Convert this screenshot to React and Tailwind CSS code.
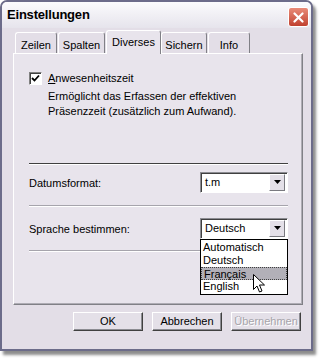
import React from 'react';

const font = { fontFamily: '"Liberation Sans", Arial, sans-serif' };

const tabs = [
  { label: 'Zeilen', w: 'w-[42px]' },
  { label: 'Spalten', w: 'w-[47px]' },
  { label: 'Diverses', w: 'w-[55px]', active: true },
  { label: 'Sichern', w: 'w-[46px]' },
  { label: 'Info', w: 'w-[42px]' },
];

const DropArrow = () => (
  <div className="w-[16px] h-[17px] bg-[#e4e0e8] border border-t-white border-l-white border-r-[#7a7a80] border-b-[#7a7a80] flex items-center justify-center">
    <svg width="7" height="4" viewBox="0 0 7 4">
      <path d="M0 0h7L3.5 4z" fill="#000" />
    </svg>
  </div>
);

const Select = ({ value }) => (
  <div className="w-[88px] h-[21px] bg-white border border-t-[#8c8c92] border-l-[#8c8c92] border-r-white border-b-white shadow-[inset_1px_1px_0_#404040] flex items-center justify-between pl-[4px] pr-[2px]">
    <span className="text-[11px] leading-none text-black">{value}</span>
    <DropArrow />
  </div>
);

const Button = ({ children, disabled }) => (
  <button
    className={
      'w-[70px] h-[19px] bg-[#e4e0e8] border border-t-white border-l-white border-r-[#404040] border-b-[#404040] shadow-[inset_-1px_-1px_0_#8c8c92] text-[11px] leading-none ' +
      (disabled ? 'text-[#a6a4aa] [text-shadow:1px_1px_0_#ffffff]' : 'text-black')
    }
  >
    {children}
  </button>
);

export default function App() {
  return (
    <div className="w-[319px] h-[359px] bg-white" style={font}>
      <div className="w-[313px] h-[351px] flex flex-col bg-[#e3dee7] border-2 border-[#6c6c8a] rounded-t-[7px] shadow-[3px_4px_3px_rgba(0,0,0,0.45)]">
        {/* Titelleiste */}
        <div className="h-[26px] flex items-center justify-between pl-[5px] pr-[2px] rounded-t-[5px] bg-gradient-to-b from-[#fbfbfd] to-[#e6e4ec]">
          <span className="text-[13px] font-bold text-black tracking-[-0.2px]">Einstellungen</span>
          <div className="w-[21px] h-[20px] mt-[4px] rounded-[3px] border border-white bg-gradient-to-b from-[#e98b78] to-[#c0402f] flex items-center justify-center">
            <svg width="11" height="11" viewBox="0 0 11 11">
              <path d="M1.5 1.5l8 8M9.5 1.5l-8 8" stroke="#fff" strokeWidth="2.2" strokeLinecap="round" />
            </svg>
          </div>
        </div>

        {/* Inhalt */}
        <div className="flex-1 flex flex-col pl-[11px] pr-[9px]">
          <div className="flex items-end h-[24px] pl-[2px] mt-[1px]">
            {tabs.map((t) =>
              t.active ? (
                <div
                  key={t.label}
                  className={`${t.w} h-[24px] -mb-[1px] z-10 relative bg-[#e8e4ec] border-t border-l border-white border-r border-r-[#808086] rounded-t-[3px] flex justify-center pt-[3px] text-[11px] text-black`}
                >
                  {t.label}
                </div>
              ) : (
                <div
                  key={t.label}
                  className={`${t.w} h-[21px] mr-[1px] bg-[#e3dee7] border-t border-l border-white border-r border-r-[#808086] rounded-t-[3px] flex justify-center pt-[4px] text-[11px] text-black`}
                >
                  {t.label}
                </div>
              )
            )}
          </div>

          {/* Registerkarte */}
          <div className="w-[290px] h-[252px] bg-[#e8e4ec] border border-t-white border-l-white border-r-[#808086] border-b-[#808086] shadow-[inset_-1px_-1px_0_#aeacb4] flex flex-col pl-[15px] pr-[14px]">
            <div className="flex items-center gap-[6px] mt-[16px]">
              <div className="w-[13px] h-[13px] bg-white border border-t-[#808080] border-l-[#808080] border-r-white border-b-white shadow-[inset_1px_1px_0_#404040] flex items-center justify-center">
                <svg width="9" height="9" viewBox="0 0 9 9">
                  <path d="M1 4l2.5 2.5L8 1.5" stroke="#000" strokeWidth="1.8" fill="none" />
                </svg>
              </div>
              <span className="text-[11px] text-black">
                <span className="underline">A</span>nwesenheitszeit
              </span>
            </div>
            <p className="ml-[19px] mt-[2px] text-[11px] leading-[15px] text-black">
              Ermöglicht das Erfassen der effektiven
              <br />
              Präsenzzeit (zusätzlich zum Aufwand).
            </p>

            <div className="mt-[44px] border-t border-[#404040] border-b border-b-white" />

            <div className="flex items-center justify-between mt-[7px]">
              <span className="text-[11px] text-black mt-[3px]">Datumsformat:</span>
              <Select value="t.m" />
            </div>

            <div className="mt-[12px] border-t border-[#a6a4ac] border-b border-b-white" />

            <div className="relative flex items-center justify-between mt-[11px]">
              <span className="text-[11px] text-black mt-[3px]">Sprache bestimmen:</span>
              <Select value="Deutsch" />
              {/* Aufgeklappte Liste */}
              <div className="absolute right-0 top-[21px] w-[88px] z-20 bg-white border border-black flex flex-col py-[1px] text-[11px] text-black">
                <div className="h-[13px] leading-[13px] pl-[2px]">Automatisch</div>
                <div className="h-[13px] leading-[13px] pl-[2px]">Deutsch</div>
                <div className="h-[13px] leading-[13px] pl-[2px] bg-[#b2b0b8] border border-dotted border-[#404040]">Français</div>
                <div className="h-[13px] leading-[13px] pl-[2px]">English</div>
                <svg className="absolute left-[52px] top-[34px]" width="12" height="19" viewBox="0 0 12 19">
                  <path d="M0.5 0.5v15l3.5-3.5 2.5 6 2.5-1-2.5-6h5z" fill="#fff" stroke="#000" strokeWidth="1" />
                </svg>
              </div>
            </div>

            <div className="mt-[11px] border-t border-[#a6a4ac] border-b border-b-white" />
          </div>

          {/* Schaltflächen */}
          <div className="flex justify-end gap-[9px] mt-[7px] pr-[1px]">
            <Button>OK</Button>
            <Button>Abbrechen</Button>
            <Button disabled>Übernehmen</Button>
          </div>
        </div>
      </div>
    </div>
  );
}
